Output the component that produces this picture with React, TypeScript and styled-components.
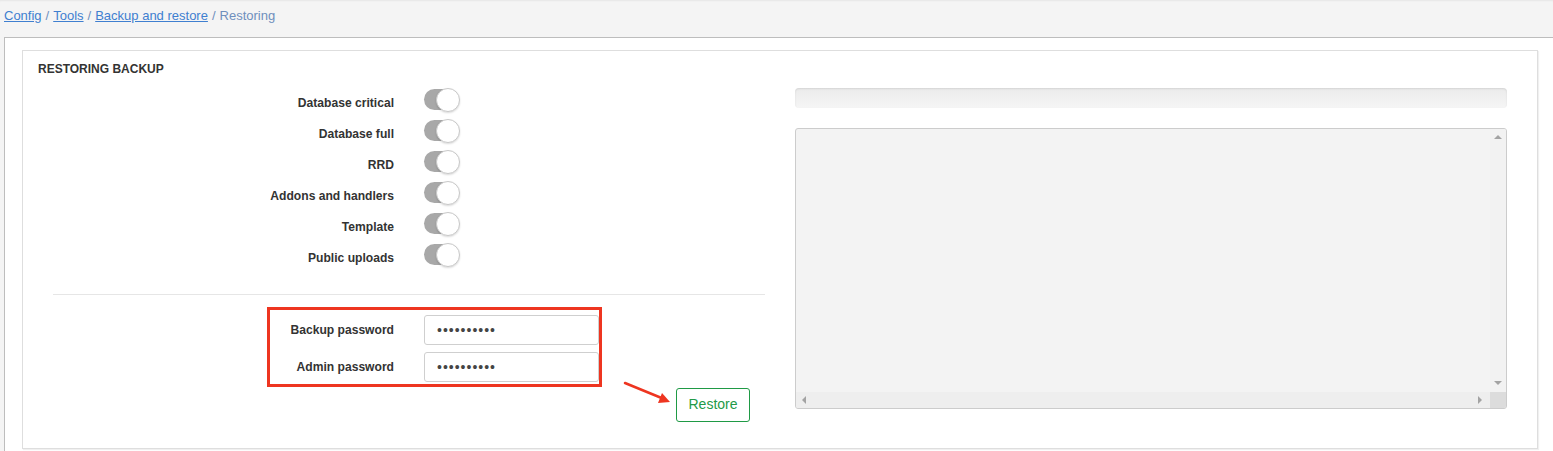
import React from "react";
import styled, { createGlobalStyle } from "styled-components";

const Global = createGlobalStyle`
  html, body {
    margin: 0;
    padding: 0;
    background: #f4f4f4;
    font-family: "Liberation Sans", Arial, Helvetica, sans-serif;
    color: #333;
    overflow: hidden;
  }
  * { box-sizing: border-box; }
`;

const Page = styled.div`
  width: 1553px;
  height: 451px;
  overflow: hidden;
  box-shadow: inset 0 2px 2px -1px rgba(0, 0, 0, 0.06);
`;

const Breadcrumb = styled.nav`
  padding: 7px 4px 12px;
  font-size: 13px;
  line-height: 18px;
  color: #6f8fbd;
  white-space: nowrap;
`;

const Crumb = styled.a`
  color: #3f7fd0;
  text-decoration: underline;
  cursor: pointer;
`;

const Sep = styled.span`
  color: #6f8fbd;
  margin: 0 4px;
`;

const Outer = styled.div`
  margin-left: 4px;
  width: 1600px;
  border: 1px solid #bdbdbd;
  background: #fff;
  padding: 12px 0 0 17px;
  height: 420px;
`;

const Card = styled.section`
  width: 1516px;
  background: #fff;
  border: 1px solid #dedede;
  box-shadow: 1px 1px 1px rgba(0, 0, 0, 0.06);
  padding: 11px 15px 26px;
`;

const Title = styled.h3`
  margin: 0;
  font-size: 12px;
  line-height: 14px;
  font-weight: bold;
  text-transform: uppercase;
  color: #333;
`;

const Body = styled.div`
  display: flex;
  gap: 15px;
`;

const LeftCol = styled.div`
  width: 742px;
  flex: none;
  padding-top: 8px;
`;

const RightCol = styled.div`
  width: 712px;
  flex: none;
  padding-top: 12px;
`;

const ToggleRow = styled.div`
  display: grid;
  grid-template-columns: 356px auto;
  column-gap: 30px;
  align-items: center;
  height: 31px;
`;

const Label = styled.label<{ $offset?: number }>`
  text-align: right;
  font-size: 12.1px;
  font-weight: bold;
  color: #333;
  padding-top: ${({ $offset = 0 }) => $offset}px;
`;

const Toggle = styled.span`
  position: relative;
  display: block;
  width: 35px;
  height: 21px;
  border-radius: 11px;
  background: #a8a8a8;
  &::after {
    content: "";
    position: absolute;
    right: -1px;
    top: -1px;
    width: 22px;
    height: 22px;
    border-radius: 50%;
    background: #fff;
    border: 1px solid #c9c9c9;
    box-shadow: 0 1px 2px rgba(0, 0, 0, 0.15);
  }
`;

const Divider = styled.hr`
  margin: 24px 15px 12px;
  border: 0;
  border-top: 1px solid #e6e6e6;
  height: 0;
`;

const Highlight = styled.div`
  margin-left: 229px;
  width: 335px;
  border: 3px solid #ee3520;
  padding: 5px 0 2px;
  display: flex;
  flex-direction: column;
  gap: 7px;
`;

const FieldRow = styled.div`
  display: grid;
  grid-template-columns: 124px 175px;
  column-gap: 30px;
  align-items: center;
`;

const PasswordInput = styled.input`
  width: 175px;
  height: 30px;
  border: 1px solid #cfcfcf;
  border-radius: 3px;
  padding: 0 12px;
  font-size: 14px;
  color: #444;
  letter-spacing: 1px;
  background: #fff;
  font-family: "Liberation Sans", Arial, sans-serif;
  outline: none;
`;

const ButtonRow = styled.div`
  position: relative;
  margin-top: 1px;
  padding-left: 638px;
`;

const RestoreButton = styled.button`
  height: 34px;
  width: 74px;
  border: 1px solid #1f9a45;
  border-radius: 3px;
  background: #fff;
  color: #229a48;
  font-size: 14px;
  font-family: "Liberation Sans", Arial, sans-serif;
  padding: 0 0 2px;
  cursor: pointer;
`;

const Arrow = styled.svg`
  position: absolute;
  left: 582px;
  top: -10px;
`;

const Progress = styled.div`
  height: 20px;
  border-radius: 4px;
  background: linear-gradient(#ebebeb, #f5f5f5);
  box-shadow: inset 0 1px 2px rgba(0, 0, 0, 0.1);
`;

const LogBox = styled.div`
  margin-top: 20px;
  height: 281px;
  border: 1px solid #cccccc;
  border-radius: 3px;
  background: #f3f3f3;
  display: grid;
  grid-template-columns: 1fr 16px;
  grid-template-rows: 1fr 16px;
  overflow: hidden;
`;

const LogContent = styled.div``;

const VScroll = styled.div`
  display: flex;
  flex-direction: column;
  justify-content: space-between;
  align-items: center;
  padding: 6px 0 7px;
  background: #f2f2f2;
`;

const HScroll = styled.div`
  display: flex;
  justify-content: space-between;
  align-items: center;
  padding: 0 8px 0 6px;
  background: #eeeeee;
`;

const Corner = styled.div`
  background: #dcdcdc;
`;

const Tri = styled.span<{ $dir: "up" | "down" | "left" | "right" }>`
  width: 0;
  height: 0;
  display: block;
  ${({ $dir }) =>
    $dir === "up"
      ? "border-left: 4px solid transparent; border-right: 4px solid transparent; border-bottom: 4px solid #a3a3a3;"
      : $dir === "down"
      ? "border-left: 4px solid transparent; border-right: 4px solid transparent; border-top: 4px solid #a3a3a3;"
      : $dir === "left"
      ? "border-top: 4px solid transparent; border-bottom: 4px solid transparent; border-right: 4px solid #a3a3a3;"
      : "border-top: 4px solid transparent; border-bottom: 4px solid transparent; border-left: 4px solid #a3a3a3;"}
`;

const toggles = [
  "Database critical",
  "Database full",
  "RRD",
  "Addons and handlers",
  "Template",
  "Public uploads",
];

export default function App() {
  return (
    <>
      <Global />
      <Page>
        <Breadcrumb>
          <Crumb>Config</Crumb>
          <Sep>/</Sep>
          <Crumb>Tools</Crumb>
          <Sep>/</Sep>
          <Crumb>Backup and restore</Crumb>
          <Sep>/</Sep>
          <span>Restoring</span>
        </Breadcrumb>
        <Outer>
          <Card>
            <Title>Restoring backup</Title>
            <Body>
              <LeftCol>
                {toggles.map((t) => (
                  <ToggleRow key={t}>
                    <Label $offset={6}>{t}</Label>
                    <Toggle />
                  </ToggleRow>
                ))}
                <Divider />
                <Highlight>
                  <FieldRow>
                    <Label>Backup password</Label>
                    <PasswordInput type="password" defaultValue="1234567890" />
                  </FieldRow>
                  <FieldRow>
                    <Label>Admin password</Label>
                    <PasswordInput type="password" defaultValue="1234567890" />
                  </FieldRow>
                </Highlight>
                <ButtonRow>
                  <Arrow width="56" height="28" viewBox="0 0 56 28">
                    <line x1="5" y1="5" x2="44" y2="21" stroke="#ee3520" strokeWidth="2.5" strokeLinecap="round" />
                    <polygon points="50,24 38,25 42,15" fill="#ee3520" />
                  </Arrow>
                  <RestoreButton>Restore</RestoreButton>
                </ButtonRow>
              </LeftCol>
              <RightCol>
                <Progress />
                <LogBox>
                  <LogContent />
                  <VScroll>
                    <Tri $dir="up" />
                    <Tri $dir="down" />
                  </VScroll>
                  <HScroll>
                    <Tri $dir="left" />
                    <Tri $dir="right" />
                  </HScroll>
                  <Corner />
                </LogBox>
              </RightCol>
            </Body>
          </Card>
        </Outer>
      </Page>
    </>
  );
}
